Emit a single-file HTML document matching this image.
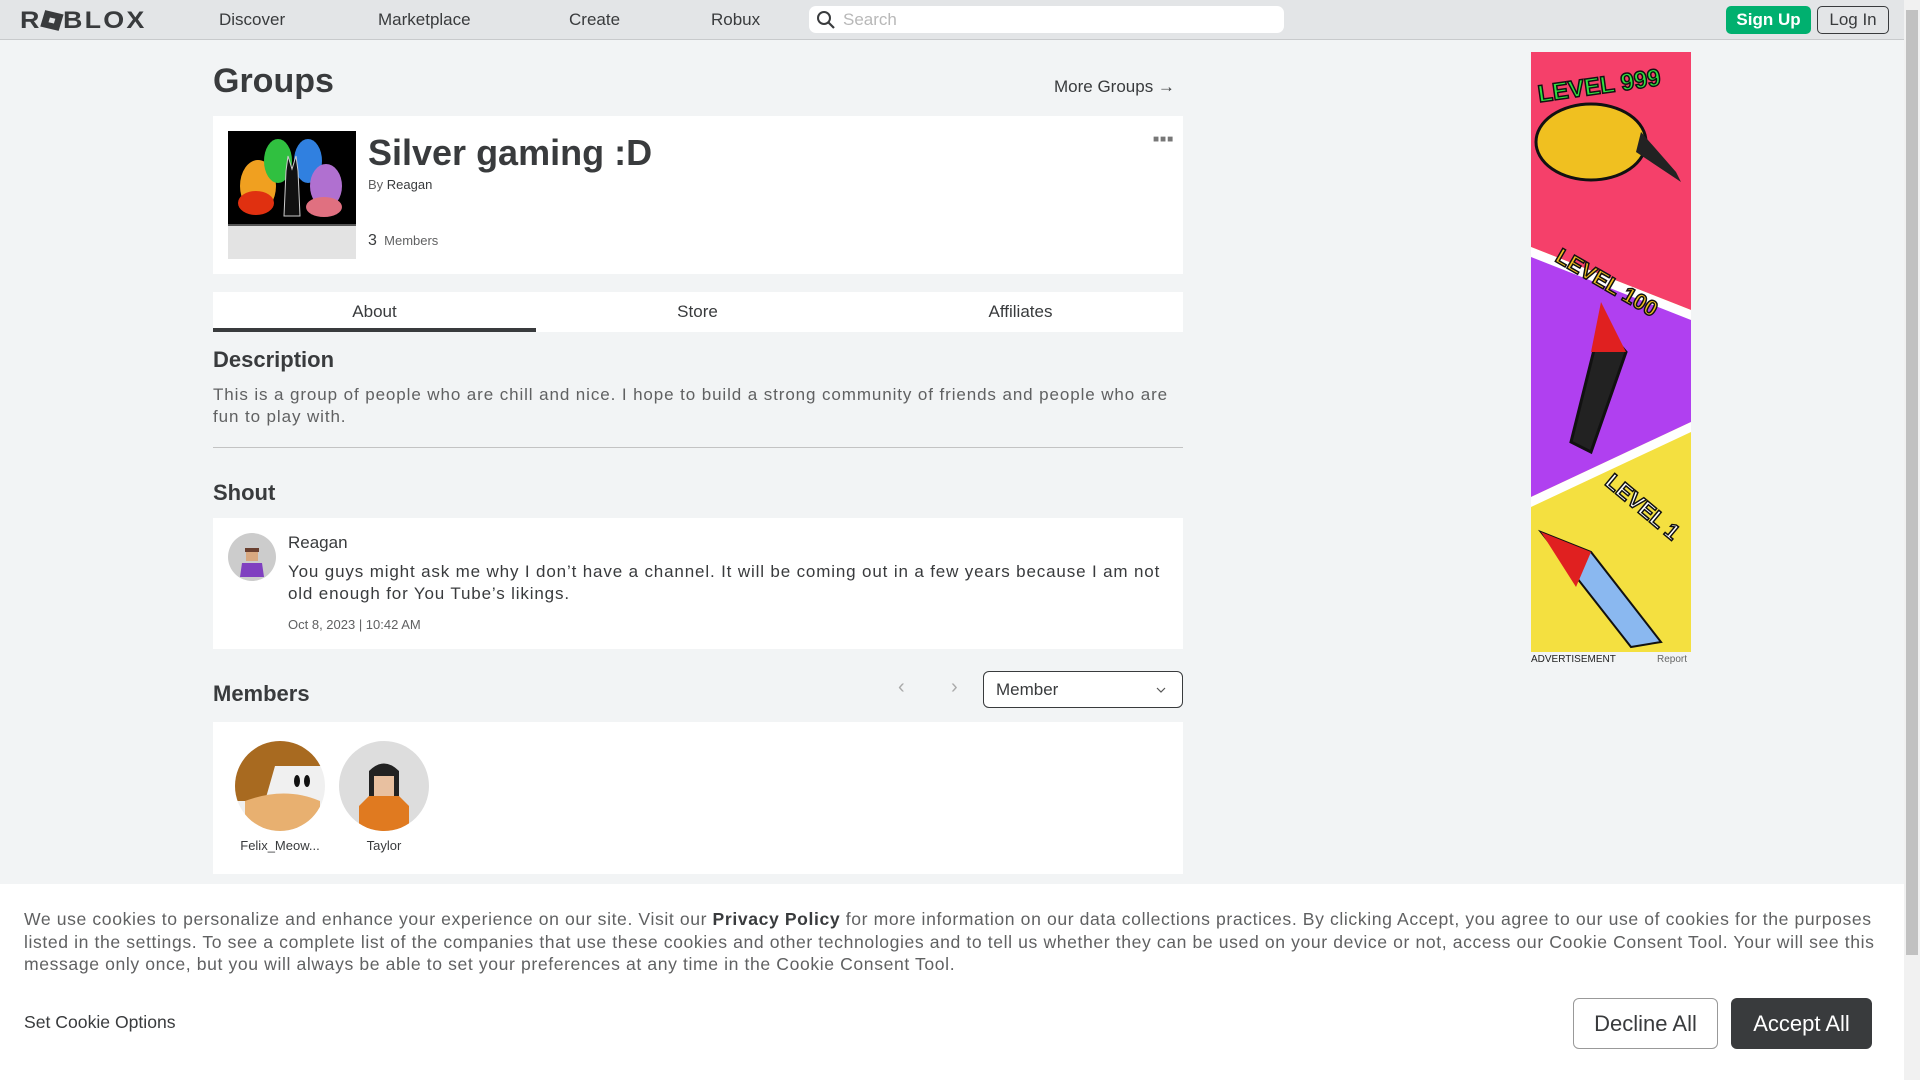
<!DOCTYPE html>
<html><head><meta charset="utf-8"><style>
*{margin:0;padding:0;box-sizing:border-box}
body{width:1920px;height:1080px;overflow:hidden;background:#f2f4f5;font-family:"Liberation Sans",sans-serif;color:#393b3d;position:relative}
.a{position:absolute;white-space:nowrap}
.nav{position:absolute;left:0;top:0;width:1904px;height:40px;background:#e3e5e7;border-bottom:1px solid #c8cacc}
.nav .l{font-size:17px;top:10px;color:#393b3d}
.card{position:absolute;background:#fff}
h2{font-size:22px;font-weight:bold}
</style></head><body>
<div class="nav">
  <div class="a" style="left:20px;top:7px;font-size:24px;font-weight:900;letter-spacing:2px;color:#393b3d;transform:scaleX(1.12);transform-origin:0 0">R<span style="display:inline-block;width:17px;height:17px;background:#393b3d;transform:rotate(15deg);vertical-align:-1px;margin:0 1px;position:relative"><span style="position:absolute;left:6px;top:6px;width:5px;height:5px;background:#e3e5e7"></span></span>BLOX</div>
  <div class="a l" style="left:219px">Discover</div>
  <div class="a l" style="left:378px">Marketplace</div>
  <div class="a l" style="left:569px">Create</div>
  <div class="a l" style="left:711px">Robux</div>
  <div class="a" style="left:809px;top:6px;width:475px;height:27px;background:#fff;border-radius:7px">
    <svg class="a" style="left:7px;top:4px" width="20" height="20" viewBox="0 0 20 20"><circle cx="8" cy="8" r="6" fill="none" stroke="#393b3d" stroke-width="2"/><path d="M12.5 12.5L18 18" stroke="#393b3d" stroke-width="2.2"/></svg>
    <div class="a" style="left:34px;top:4px;font-size:17px;color:#b8b8b8">Search</div>
  </div>
  <div class="a" style="left:1726px;top:6px;width:85px;height:28px;background:#00b06f;border-radius:5px;color:#fff;font-weight:bold;font-size:17px;text-align:center;line-height:28px">Sign Up</div>
  <div class="a" style="left:1817px;top:6px;width:72px;height:28px;border:1px solid #393b3d;border-radius:5px;font-size:17px;text-align:center;line-height:26px">Log In</div>
</div>
<div class="a" style="left:1904px;top:0;width:16px;height:1080px;background:#f1f1f1"></div>
<div class="a" style="left:1906px;top:10px;width:12px;height:945px;background:#c1c1c1"></div>

<div class="a" style="left:213px;top:62px;font-size:34px;font-weight:bold">Groups</div>
<div class="a" style="left:1054px;top:77px;font-size:17px">More Groups →</div>

<div class="card" style="left:213px;top:116px;width:970px;height:158px">
  <svg class="a" style="left:15px;top:15px" width="128" height="128" viewBox="0 0 128 128">
    <rect width="128" height="93" fill="#000"/>
    <ellipse cx="30" cy="55" rx="18" ry="26" fill="#f0a020"/>
    <ellipse cx="50" cy="30" rx="14" ry="22" fill="#30c040"/>
    <ellipse cx="80" cy="30" rx="14" ry="22" fill="#3080e0"/>
    <ellipse cx="98" cy="55" rx="16" ry="22" fill="#b070d0"/>
    <ellipse cx="28" cy="72" rx="18" ry="12" fill="#e03010"/>
    <ellipse cx="96" cy="76" rx="18" ry="10" fill="#e07080"/>
    <path d="M58 40L60 25 64 38 68 25 70 40 72 85 56 85Z" fill="#111" stroke="#ccc"/>
    <rect y="93" width="128" height="35" fill="#e3e3e3"/>
    <rect y="93" width="128" height="2" fill="#555"/>
  </svg>
  <div class="a" style="left:155px;top:16px;font-size:36px;font-weight:bold;color:#393b3d">Silver gaming :D</div>
  <div class="a" style="left:155px;top:61px;font-size:13px;color:#606162">By <span style="color:#393b3d">Reagan</span></div>
  <div class="a" style="left:155px;top:116px;font-size:13px;color:#606162"><span style="font-size:16px;color:#393b3d">3</span>&nbsp; Members</div>
  <div class="a" style="left:940px;top:18px;font-size:10px;color:#777;letter-spacing:1px">■■■</div>
</div>

<div class="card" style="left:213px;top:292px;width:970px;height:40px">
  <div class="a" style="left:0;top:10px;width:323px;text-align:center;font-size:17px">About</div>
  <div class="a" style="left:323px;top:10px;width:323px;text-align:center;font-size:17px">Store</div>
  <div class="a" style="left:646px;top:10px;width:323px;text-align:center;font-size:17px">Affiliates</div>
  <div class="a" style="left:0;top:36px;width:323px;height:4px;background:#393b3d"></div>
</div>

<div class="a" style="left:213px;top:347px"><h2>Description</h2></div>
<div class="a" style="left:213px;top:384px;font-size:17px;line-height:22px;color:#606162;letter-spacing:0.9px">This is a group of people who are chill and nice. I hope to build a strong community of friends and people who are<br>fun to play with.</div>
<div class="a" style="left:213px;top:447px;width:970px;height:1px;background:#c3c3c3"></div>

<div class="a" style="left:213px;top:480px"><h2>Shout</h2></div>
<div class="card" style="left:213px;top:518px;width:970px;height:131px">
  <svg class="a" style="left:15px;top:15px" width="48" height="48" viewBox="0 0 48 48"><circle cx="24" cy="24" r="24" fill="#ccc"/><rect x="18" y="16" width="12" height="12" fill="#d8a880"/><path d="M17 15h14v4H17z" fill="#6a4030"/><path d="M14 30h20l2 14H12z" fill="#8040c0"/></svg>
  <div class="a" style="left:75px;top:15px;font-size:17px;color:#393b3d">Reagan</div>
  <div class="a" style="left:75px;top:43px;font-size:17px;line-height:22px;color:#393b3d;letter-spacing:0.85px">You guys might ask me why I don’t have a channel. It will be coming out in a few years because I am not<br>old enough for You Tube’s likings.</div>
  <div class="a" style="left:75px;top:99px;font-size:13px;color:#606162">Oct 8, 2023 | 10:42 AM</div>
</div>

<div class="a" style="left:213px;top:681px"><h2>Members</h2></div>
<div class="a" style="left:898px;top:676px;font-size:20px;color:#aaa">‹</div>
<div class="a" style="left:951px;top:676px;font-size:20px;color:#aaa">›</div>
<div class="a" style="left:983px;top:671px;width:200px;height:37px;border:1px solid #393b3d;border-radius:6px;background:#fff">
  <div class="a" style="left:12px;top:8px;font-size:17px">Member</div>
  <svg class="a" style="left:172px;top:14px" width="10" height="8" viewBox="0 0 10 8"><path d="M1 2l4 4 4-4" fill="none" stroke="#555" stroke-width="1.2"/></svg>
</div>
<div class="card" style="left:213px;top:722px;width:970px;height:152px">
  <svg class="a" style="left:22px;top:19px" width="90" height="90" viewBox="0 0 90 90"><defs><clipPath id="c1"><circle cx="45" cy="45" r="45"/></clipPath></defs><g clip-path="url(#c1)"><rect width="90" height="90" fill="#f0f0f0"/><path d="M0 0h90v25H40L30 60H0z" fill="#a86a20"/><path d="M10 60q40-15 75 0v30H10z" fill="#e8b070"/><ellipse cx="62" cy="40" rx="3" ry="6" fill="#111"/><ellipse cx="72" cy="40" rx="3" ry="6" fill="#111"/></g></svg>
  <div class="a" style="left:22px;top:116px;width:90px;text-align:center;font-size:13px">Felix_Meow...</div>
  <svg class="a" style="left:126px;top:19px" width="90" height="90" viewBox="0 0 90 90"><defs><clipPath id="c2"><circle cx="45" cy="45" r="45"/></clipPath></defs><g clip-path="url(#c2)"><rect width="90" height="90" fill="#ddd"/><path d="M30 30q15-15 30 0v30H30z" fill="#222"/><rect x="35" y="35" width="20" height="20" fill="#e8c0a0"/><path d="M30 55l-10 10v25h50V65L60 55z" fill="#e07a20"/></g></svg>
  <div class="a" style="left:126px;top:116px;width:90px;text-align:center;font-size:13px">Taylor</div>
</div>

<svg class="a" style="left:1531px;top:52px" width="160" height="600" viewBox="0 0 160 600">
  <rect width="160" height="600" fill="#f4e040"/>
  <path d="M0 0H160V258L0 195Z" fill="#f5406a"/>
  <path d="M0 200L160 263V370L0 445Z" fill="#b040f0"/>
  <path d="M0 195L160 258V268L0 205Z" fill="#fff"/>
  <path d="M0 445L160 370V380L0 455Z" fill="#fff"/>
  <text x="6" y="40" font-family="Liberation Sans" font-weight="900" font-size="24" fill="#30e040" stroke="#111" stroke-width="1.5" transform="rotate(-8 80 30)">LEVEL 999</text>
  <ellipse cx="60" cy="90" rx="55" ry="38" fill="#f0c020" stroke="#111" stroke-width="3"/>
  <path d="M105 100L150 130 145 120 110 80Z" fill="#222"/>
  <text x="20" y="240" font-family="Liberation Sans" font-weight="900" font-size="22" fill="#f0c020" stroke="#111" stroke-width="1.5" transform="rotate(30 80 230)">LEVEL 100</text>
  <path d="M40 390L70 270 95 300 60 400Z" fill="#222" stroke="#111" stroke-width="3"/>
  <path d="M70 250L95 300 60 300Z" fill="#e02020"/>
  <text x="70" y="460" font-family="Liberation Sans" font-weight="900" font-size="22" fill="#fff" stroke="#111" stroke-width="1.5" transform="rotate(40 110 450)">LEVEL 1</text>
  <path d="M10 480L60 500 130 590 100 595Z" fill="#8ab8f0" stroke="#111" stroke-width="2"/>
  <path d="M10 480L60 500 45 535Z" fill="#e02020"/>
</svg>
<div class="a" style="left:1531px;top:654px;font-size:10px;color:#222">ADVERTISEMENT</div>
<div class="a" style="left:1657px;top:654px;font-size:10px;color:#666">Report</div>

<div class="a" style="left:0;top:884px;width:1904px;height:196px;background:#fff">
  <div class="a" style="left:24px;top:24px;font-size:17.6px;line-height:22.6px;color:#606162;letter-spacing:0.6px">We use cookies to personalize and enhance your experience on our site. Visit our <b style="color:#393b3d">Privacy Policy</b> for more information on our data collections practices. By clicking Accept, you agree to our use of cookies for the purposes<br>listed in the settings. To see a complete list of the companies that use these cookies and other technologies and to tell us whether they can be used on your device or not, access our Cookie Consent Tool. Your will see this<br>message only once, but you will always be able to set your preferences at any time in the Cookie Consent Tool.</div>
  <div class="a" style="left:24px;top:128px;font-size:17.6px;color:#393b3d">Set Cookie Options</div>
  <div class="a" style="left:1573px;top:114px;width:145px;height:51px;border:1px solid #999;border-radius:6px;font-size:22px;text-align:center;line-height:49px;color:#393b3d">Decline All</div>
  <div class="a" style="left:1731px;top:114px;width:141px;height:51px;background:#393b3d;border-radius:6px;font-size:22px;text-align:center;line-height:51px;color:#fff">Accept All</div>
</div>
</body></html>
